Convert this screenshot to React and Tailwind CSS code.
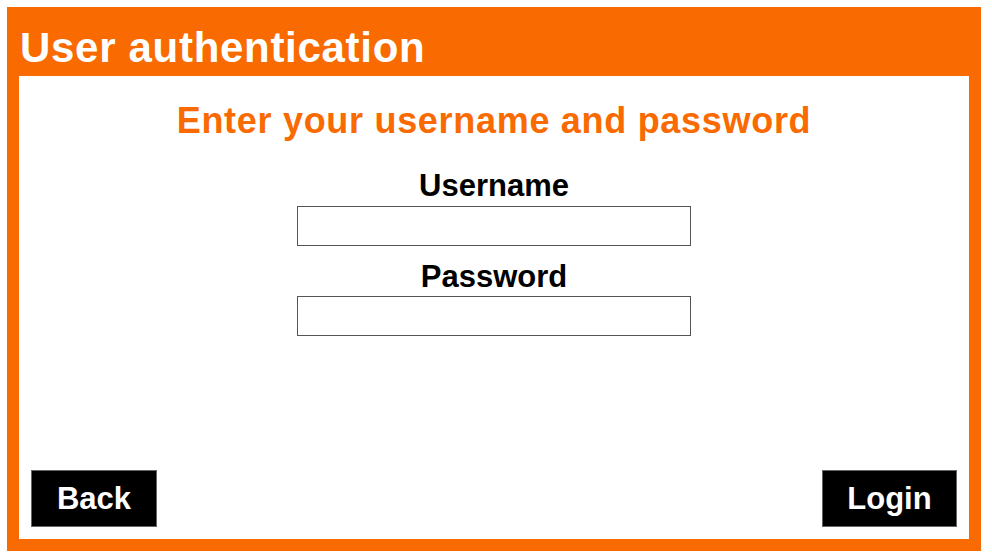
export default function App() {
  const font = { fontFamily: '"Liberation Sans", Arial, sans-serif' };
  return (
    <div className="w-[992px] h-[557px] bg-white pl-[7px] pt-[7px]" style={font}>
      <div className="w-[974px] h-[544px] bg-[#f96a00] flex flex-col">
        <div className="h-[69px] pl-[13px] pt-[20px]">
          <h1 className="text-[42px] leading-none font-bold text-white tracking-[0.7px]">
            User authentication
          </h1>
        </div>
        <div className="flex-1 mx-[12px] mb-[12px] bg-white flex flex-col">
          <h2 className="pt-[27px] text-center text-[36px] leading-none font-bold text-[#f96a00] tracking-[0.7px]">
            Enter your username and password
          </h2>
          <div className="flex flex-col items-center">
            <label className="mt-[31px] text-[31px] leading-none font-bold text-black">Username</label>
            <input
              type="text"
              className="mt-[5px] w-[394px] h-[40px] border border-[#555] bg-white outline-none"
            />
            <label className="mt-[15px] text-[31px] leading-none font-bold text-black">Password</label>
            <input
              type="password"
              className="mt-[4px] w-[394px] h-[40px] border border-[#555] bg-white outline-none"
            />
          </div>
          <div className="mt-auto flex justify-between px-[12px] pb-[12px]">
            <button className="w-[126px] h-[57px] bg-black border border-[#666] text-white text-[31px] leading-none font-bold flex items-center justify-center">
              Back
            </button>
            <button className="w-[135px] h-[57px] bg-black border border-[#666] text-white text-[31px] leading-none font-bold flex items-center justify-center">
              Login
            </button>
          </div>
        </div>
      </div>
    </div>
  );
}
